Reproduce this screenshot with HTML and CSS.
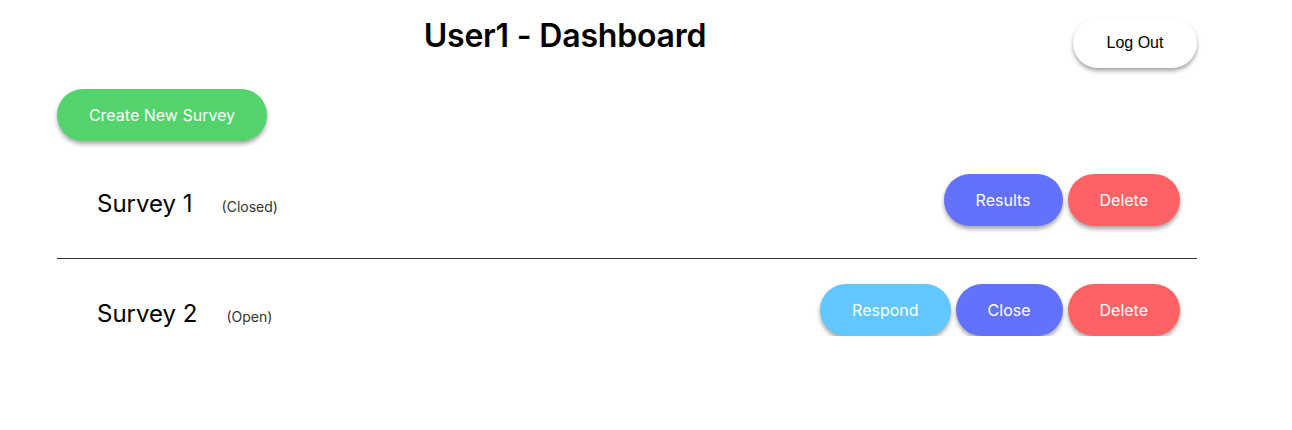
FILE: index.html
```html
<!DOCTYPE html>
<html lang="en">
<head>
<meta charset="utf-8">
<title>User1 - Dashboard</title>
<link rel="stylesheet" href="styles.css">
</head>
<body>
<div class="page">
  <header class="header">
    <h1 class="title">User1 - Dashboard</h1>
    <button class="logout">Log Out</button>
  </header>
  <button class="btn btn-green create">Create New Survey</button>
  <ul class="survey-list">
    <li class="survey-item">
      <div class="survey-info">
        <span class="survey-name">Survey 1</span>
        <span class="survey-status">(Closed)</span>
      </div>
      <div class="survey-actions">
        <button class="btn btn-blue">Results</button>
        <button class="btn btn-red">Delete</button>
      </div>
    </li>
    <li class="survey-item">
      <div class="survey-info">
        <span class="survey-name">Survey 2</span>
        <span class="survey-status">(Open)</span>
      </div>
      <div class="survey-actions">
        <button class="btn btn-light">Respond</button>
        <button class="btn btn-blue">Close</button>
        <button class="btn btn-red">Delete</button>
      </div>
    </li>
  </ul>
</div>
</body>
</html>
```

FILE: styles.css
```css
* { box-sizing: border-box; }

body {
  margin: 0;
  background: #ffffff;
  font-family: Inter, "Noto Sans", sans-serif;
  color: #000;
}

.page {
  width: 1140px;
  margin-left: 57px;
}

.header {
  display: flex;
  align-items: flex-start;
}

.title {
  flex: 1;
  margin: 16px 0 0;
  text-align: center;
  font-size: 32px;
  font-weight: 600;
  line-height: 39px;
  letter-spacing: -0.2px;
}

.logout {
  margin-top: 18px;
  width: 124px;
  height: 50px;
  border: none;
  border-radius: 25px;
  background: #fff;
  font-family: "Liberation Sans", Arial, sans-serif;
  font-size: 16px;
  color: #000;
  box-shadow: 0 3px 4px rgba(0, 0, 0, 0.35);
}

.btn {
  height: 52px;
  padding: 0 32px;
  border: none;
  border-radius: 26px;
  font-family: Inter, "Noto Sans", sans-serif;
  font-size: 16px;
  color: #fff;
  white-space: nowrap;
  box-shadow: 0 3px 4px rgba(0, 0, 0, 0.35);
}

.btn-green { background: #53d36b; }
.btn-blue { background: #6272ff; }
.btn-red { background: #ff6264; }
.btn-light { background: #62c6ff; }

.create {
  margin-top: 21px;
  width: 210px;
  padding: 0;
}

.survey-list {
  list-style: none;
  margin: 33px 0 0;
  padding: 0;
}

.survey-item {
  display: flex;
  align-items: center;
  justify-content: space-between;
  height: 52px;
  padding: 0 17px 0 40px;
  box-sizing: content-box;
}

.survey-item + .survey-item {
  margin-top: 32px;
  padding-top: 25px;
  border-top: 1px solid #333;
}

.survey-info {
  display: flex;
  align-items: baseline;
  gap: 29px;
  margin-top: 7px;
}

.survey-name {
  font-size: 24px;
}

.survey-status {
  font-size: 14px;
  color: #333;
}

.survey-actions {
  display: flex;
  gap: 5px;
}
```
